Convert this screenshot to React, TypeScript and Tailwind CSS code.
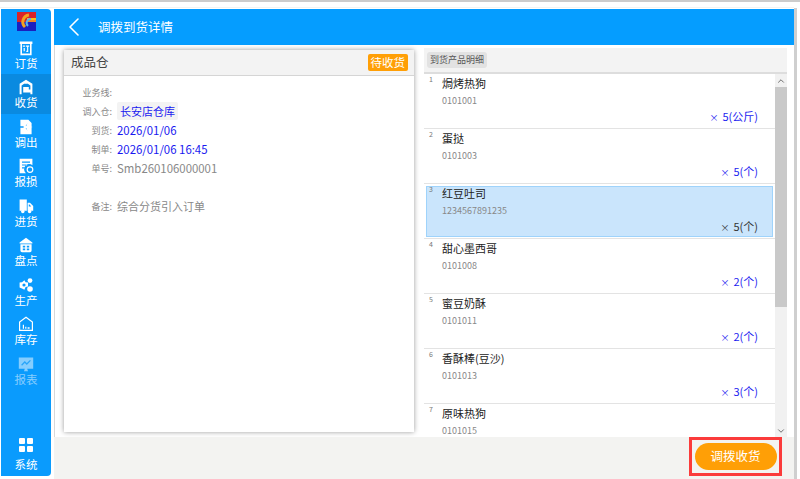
import { ChevronDown, ChevronLeft, ChevronUp } from "lucide-react";
import type { ReactNode } from "react";

const cjk = "font-['Noto_Sans_CJK_SC','Liberation_Sans',sans-serif]";

const Doc = ({ children }: { children: ReactNode }) => (
  <svg width="16" height="16" viewBox="0 0 20 20" fill="white">
    {children}
  </svg>
);

const navItems: { label: string; icon: ReactNode; active?: boolean; muted?: boolean }[] = [
  {
    label: "订货",
    icon: (
      <Doc>
        <path d="M2 2h16v3h-1v14H3V5H2zM5 5v12h10V5z" fillRule="evenodd" />
        <path d="M6 7h3v1.500H6zM10 7h4v1.500h-1.200V15h-2.400v-1.500h1V8.500H10zM7 10h1.500v4H7z" />
      </Doc>
    ),
  },
  {
    label: "收货",
    active: true,
    icon: (
      <Doc>
        <path d="M10 1l8 5v13h-2.500V8L10 4.500 4.500 8v11H2V6z" />
        <path d="M8 2.500h4V6H8zM6.500 10h7v3h4v4H6.500z" />
      </Doc>
    ),
  },
  {
    label: "调出",
    icon: (
      <Doc>
        <path d="M3 1h10l4 4v4h-5V5.500L9 9H3zM3 11h6l3 3.500V11h5v8H3z" />
        <path d="M11 5l7 5-7 5v-3H7V8h4z" />
      </Doc>
    ),
  },
  {
    label: "报损",
    icon: (
      <Doc>
        <path d="M2 1h16v8a6 6 0 0 0-8 10H2zM5 4.500V6h10V4.500zM5 8v1.500h6V8zM5 11.500V13h3v-1.500z" fillRule="evenodd" />
        <circle cx="15" cy="14.500" r="3.500" fill="none" stroke="white" strokeWidth="1.500" />
      </Doc>
    ),
  },
  {
    label: "进货",
    icon: (
      <Doc>
        <path d="M2 2h9v14H2zM12 6h3l4 4v6h-7zM13.500 8v2.500h3L14.500 8z" fillRule="evenodd" />
        <circle cx="6" cy="17" r="2.200" />
        <circle cx="14.500" cy="17" r="2.200" />
      </Doc>
    ),
  },
  {
    label: "盘点",
    icon: (
      <Doc>
        <path d="M10 1l8 6v1H2V7z" />
        <path d="M3 9h14v8a2 2 0 0 1-2 2H5a2 2 0 0 1-2-2zM6 11v2h3v-2zM11 11v2h3v-2zM6 14.500v2h3v-2zM11 14.500v2h3v-2z" fillRule="evenodd" />
      </Doc>
    ),
  },
  {
    label: "生产",
    icon: (
      <Doc>
        <path d="M8 4l1.500 2.500 3 .5v5l-3 .500L8 16l-3-1.500L2 13V7l3-.500zM7.500 8a2 2 0 1 0 0 4 2 2 0 0 0 0-4z" fillRule="evenodd" />
        <circle cx="15" cy="4.500" r="3" />
        <circle cx="15" cy="15" r="3.500" />
      </Doc>
    ),
  },
  {
    label: "库存",
    icon: (
      <Doc>
        <path d="M10 1.500l8 6V18H2V7.500z" fill="none" stroke="white" strokeWidth="1.500" />
        <path d="M6 11h1.500v5H6zM9 13.500h1.500V16H9zM12 14h2.500v2H12z" />
      </Doc>
    ),
  },
  {
    label: "报表",
    muted: true,
    icon: (
      <Doc>
        <path d="M1 2h18v14h-7.500l1 3h-5l1-3H1z" />
        <path d="M4.500 11.500l4-4 2.500 2.500 4.500-4.500" fill="none" stroke="#46aff8" strokeWidth="1.600" />
      </Doc>
    ),
  },
];

const products = [
  { name: "焗烤热狗", code: "0101001", count: "5(公斤)" },
  { name: "蛋挞", code: "0101003", count: "5(个)" },
  { name: "红豆吐司", code: "1234567891235", count: "5(个)", selected: true },
  { name: "甜心墨西哥", code: "0101008", count: "2(个)" },
  { name: "蜜豆奶酥", code: "0101011", count: "2(个)" },
  { name: "香酥棒(豆沙)", code: "0101013", count: "3(个)" },
  { name: "原味热狗", code: "0101015", count: "" },
];

function InfoRow({ label, children }: { label: string; children?: ReactNode }) {
  return (
    <div className="flex h-[19px] items-center">
      <span className="w-[48px] shrink-0 text-right text-[9px] text-[#888888]">{label}</span>
      <span className="ml-[5px] text-[11.400px] whitespace-nowrap">{children}</span>
    </div>
  );
}

export default function App() {
  return (
    <div className={`flex h-[479px] w-[800px] flex-col overflow-hidden bg-white ${cjk}`}>
      <div className="h-[2px] shrink-0 bg-[#cccccc]" />
      <div className="h-[6px] w-[794px] shrink-0 border-b border-[#f3f3f1]" />
      <div className="flex min-h-0 flex-1">
        <div className="flex min-h-0 w-[794px] shrink-0 pt-px pl-px">
          <aside className="flex h-[467px] w-[50px] shrink-0 flex-col rounded-r-[4px] bg-[#0a9bfd] text-white">
            <div className="flex shrink-0 justify-center pt-[3px]">
              <svg width="19" height="19" viewBox="0 0 19 19">
                <rect width="19" height="19" fill="#1a1fbf" />
                <rect width="19" height="10" fill="#d8232a" />
                <rect x="10" y="6" width="9" height="2" fill="#f6c21c" />
                <rect x="10" y="8" width="9" height="2" fill="#f08a24" />
                <path d="M12 3a7 7 0 0 0-4 12" fill="none" stroke="#f3a21e" strokeWidth="3" />
                <path d="M14 7a4 4 0 0 0-3 7" fill="none" stroke="#58b6e8" strokeWidth="2" />
              </svg>
            </div>
            <nav className="mt-[3.500px] flex flex-col">
              {navItems.map((item) => (
                <div
                  key={item.label}
                  className={`flex h-[39.500px] flex-col items-center pt-[5px] ${item.active ? "bg-[#0a8ae0]" : ""} ${item.muted ? "opacity-50" : ""}`}
                >
                  <span className="h-[16px]">{item.icon}</span>
                  <span className="text-[11.500px] leading-[15px]">{item.label}</span>
                </div>
              ))}
            </nav>
            <div className="mt-auto mb-[4px] flex flex-col items-center">
              <div className="grid grid-cols-2 gap-[2px]">
                <span className="h-[6px] w-[6px] rounded-[1px] bg-white" />
                <span className="h-[6px] w-[6px] rounded-[1px] bg-white" />
                <span className="h-[6px] w-[6px] rounded-[1px] bg-white" />
                <span className="h-[6px] w-[6px] rounded-[1px] bg-white" />
              </div>
              <span className="mt-[5px] text-[11.500px] leading-[15px]">系统</span>
            </div>
          </aside>

          <main className="ml-[3px] flex w-[740px] shrink-0 flex-col bg-[#f3f3f1]">
            <header className="flex h-[36px] shrink-0 items-center bg-[#059dff] pl-[4px] text-white">
              <ChevronLeft size={32} strokeWidth={1.200} />
              <span className="ml-[8px] text-[12.500px]">调拨到货详情</span>
            </header>
            <div className="flex min-h-0 flex-1 border-l border-[#d8d8d8] bg-white">
              <section className="mt-[5px] ml-[9px] flex h-[382px] w-[350px] shrink-0 flex-col bg-white shadow-[0_0_5px_rgba(0,0,0,0.4)]">
                <div className="flex h-[26px] shrink-0 items-center justify-between border-b border-[#d5d5d5] bg-[#f3f3f3] pr-[6px] pl-[7px]">
                  <span className="text-[12.500px] text-[#444444]">成品仓</span>
                  <span className="rounded-[2px] bg-[#ff9f06] px-[3px] py-px text-[11.500px] leading-[15px] text-white">待收货</span>
                </div>
                <div className="mt-[7px] flex flex-col">
                  <InfoRow label="业务线:" />
                  <InfoRow label="调入仓:">
                    <span className="rounded-[2px] bg-[#f3f3f3] px-[3px] py-px text-[11px] text-[#1a1af0]">长安店仓库</span>
                  </InfoRow>
                  <InfoRow label="到货:"><span className="text-[#1a1af0]">2026/01/06</span></InfoRow>
                  <InfoRow label="制单:"><span className="text-[#1a1af0]">2026/01/06 16:45</span></InfoRow>
                  <InfoRow label="单号:"><span className="text-[#888888]">Smb260106000001</span></InfoRow>
                  <div className="h-[19px]" />
                  <InfoRow label="备注:"><span className="text-[11px] text-[#888888]">综合分货引入订单</span></InfoRow>
                </div>
              </section>

              <section className="mt-[3px] ml-[10px] flex h-[389px] w-[363px] shrink-0 flex-col">
                <div className="flex h-[26px] shrink-0 items-center border-b-2 border-[#dddddd] bg-[#f3f3f3] pl-[3px]">
                  <span className="rounded-[3px] bg-[#e2e2e2] px-[3px] py-px text-[9px] text-[#555555]">到货产品明细</span>
                </div>
                <div className="flex min-h-0 flex-1">
                  <ul className="min-w-0 flex-1 overflow-hidden">
                    {products.map((p, i) => (
                      <li key={p.name} className="relative h-[55px] shrink-0 border-b border-[#e3e3e3]">
                        <div className={`absolute inset-x-[2px] top-[2px] bottom-[1px] ${p.selected ? "border border-[#9fd3fb] bg-[#cae5fc]" : ""}`} />
                        <span className="absolute top-0 left-[5px] text-[7px] text-[#777777]">{i + 1}</span>
                        <p className="absolute top-[1px] left-[18px] text-[11px] leading-[16px] text-[#222222]">{p.name}</p>
                        <p className="absolute top-[21px] left-[18px] text-[9px] leading-[12px] text-[#888888]">{p.code}</p>
                        {p.count && (
                          <p className={`absolute top-[35px] right-[17px] text-[11px] leading-[15px] ${p.selected ? "text-[#333333]" : "text-[#1a1af0]"}`}>
                            <span className="mr-[4px] text-[9px]">×</span>
                            {p.count}
                          </p>
                        )}
                      </li>
                    ))}
                  </ul>
                  <div className="flex w-[12px] shrink-0 flex-col bg-[#f1f1f1]">
                    <div className="flex h-[13px] items-center justify-center">
                      <ChevronUp size={10} strokeWidth={2} className="text-[#555555]" />
                    </div>
                    <div className="h-[220px] bg-[#c9c9c9]" />
                    <div className="mt-auto flex h-[12px] items-center justify-center">
                      <ChevronDown size={10} strokeWidth={2} className="text-[#555555]" />
                    </div>
                  </div>
                </div>
              </section>
            </div>
            <footer className="flex h-[42px] shrink-0 justify-end bg-[#f3f3f1] pr-[12px]">
              <div className="flex h-[39px] w-[93px] items-center justify-center border-[3px] border-[#fb3b3b]">
                <button className="h-[27px] w-[82px] rounded-full bg-[#ff9f06] text-[12.500px] text-white">调拨收货</button>
              </div>
            </footer>
          </main>
        </div>
        <div className="w-[3px] shrink-0 bg-[#cfcfcf]" />
      </div>
    </div>
  );
}
